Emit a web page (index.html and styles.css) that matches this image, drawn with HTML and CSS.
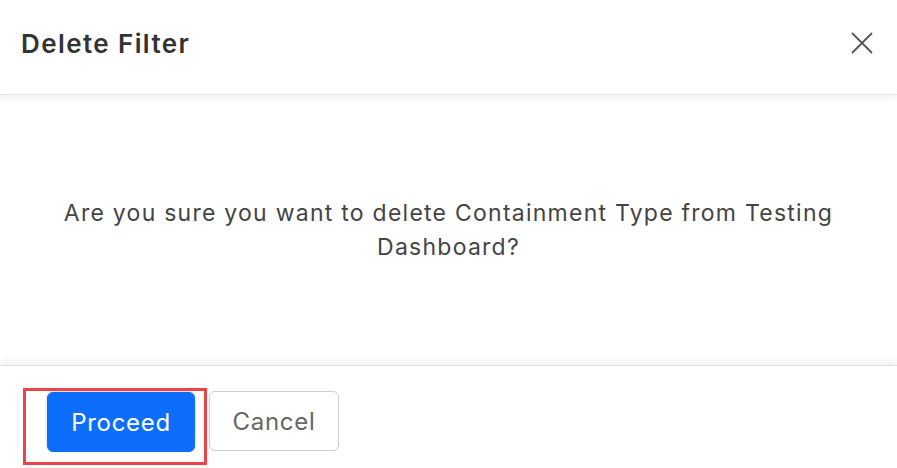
FILE: index.html
```html
<!DOCTYPE html>
<html lang="en">
<head>
<meta charset="utf-8">
<title>Delete Filter</title>
<link rel="stylesheet" href="styles.css">
</head>
<body>
<div class="modal">
  <header class="modal-header">
    <h1 class="modal-title">Delete Filter</h1>
    <button class="close" aria-label="Close">
      <svg width="22" height="22" viewBox="0 0 22 22"><path d="M1.5 1.5 L20.5 20.5 M20.5 1.5 L1.5 20.5" stroke="#555" stroke-width="1.8" fill="none" stroke-linecap="round"/></svg>
    </button>
  </header>
  <main class="modal-body">
    <p class="message">Are you sure you want to delete Containment Type from Testing Dashboard?</p>
  </main>
  <footer class="modal-footer">
    <button class="btn btn-primary">Proceed</button>
    <button class="btn btn-secondary">Cancel</button>
    <div class="highlight"></div>
  </footer>
</div>
</body>
</html>
```
FILE: styles.css
```css
* { box-sizing: border-box; }
html, body { margin: 0; padding: 0; background: #fff; }
body { font-family: Inter, "Noto Sans", sans-serif; width: 897px; height: 468px; overflow: hidden; }
.modal { display: flex; flex-direction: column; height: 468px; }
.modal-header {
  height: 95px;
  flex: none;
  display: flex;
  align-items: center;
  justify-content: space-between;
  padding: 0 21px 8px 21px;
  border-bottom: 1px solid #e4e4e4;
  box-shadow: 0 4px 6px rgba(0,0,0,0.05);
  position: relative;
  z-index: 1;
}
.modal-title { margin: 0; font-size: 26px; font-weight: 600; color: #333; letter-spacing: 1.4px; }
.close { background: none; border: 0; padding: 0; margin-right: 3px; display: flex; cursor: pointer; }
.modal-body { flex: 1; display: flex; align-items: center; justify-content: center; padding: 0 30px; }
.message { margin: 0; text-align: center; font-size: 23px; line-height: 34px; color: #444; letter-spacing: 1.25px; max-width: 820px; }
.modal-footer {
  height: 103px;
  flex: none;
  display: flex;
  align-items: flex-start;
  gap: 14px;
  padding: 25px 0 0 47px;
  border-top: 1px solid #e2e2e2;
  box-shadow: 0 -5px 7px rgba(0,0,0,0.05);
  position: relative;
}
.btn { height: 60px; border-radius: 6px; font-family: inherit; font-size: 24px; letter-spacing: 0.7px; cursor: pointer; }
.btn-primary { width: 148px; background: #0d6efd; color: #fff; border: 1px solid #0d6efd; margin-top: 1px; box-shadow: 0 -1px 3px rgba(0,0,0,0.2); }
.btn-secondary { width: 130px; background: #fff; color: #666; border: 1px solid #cfcfcf; }
.highlight { position: absolute; left: 23px; top: 22px; width: 184px; height: 77px; border: 3px solid #ee4449; pointer-events: none; }
```
